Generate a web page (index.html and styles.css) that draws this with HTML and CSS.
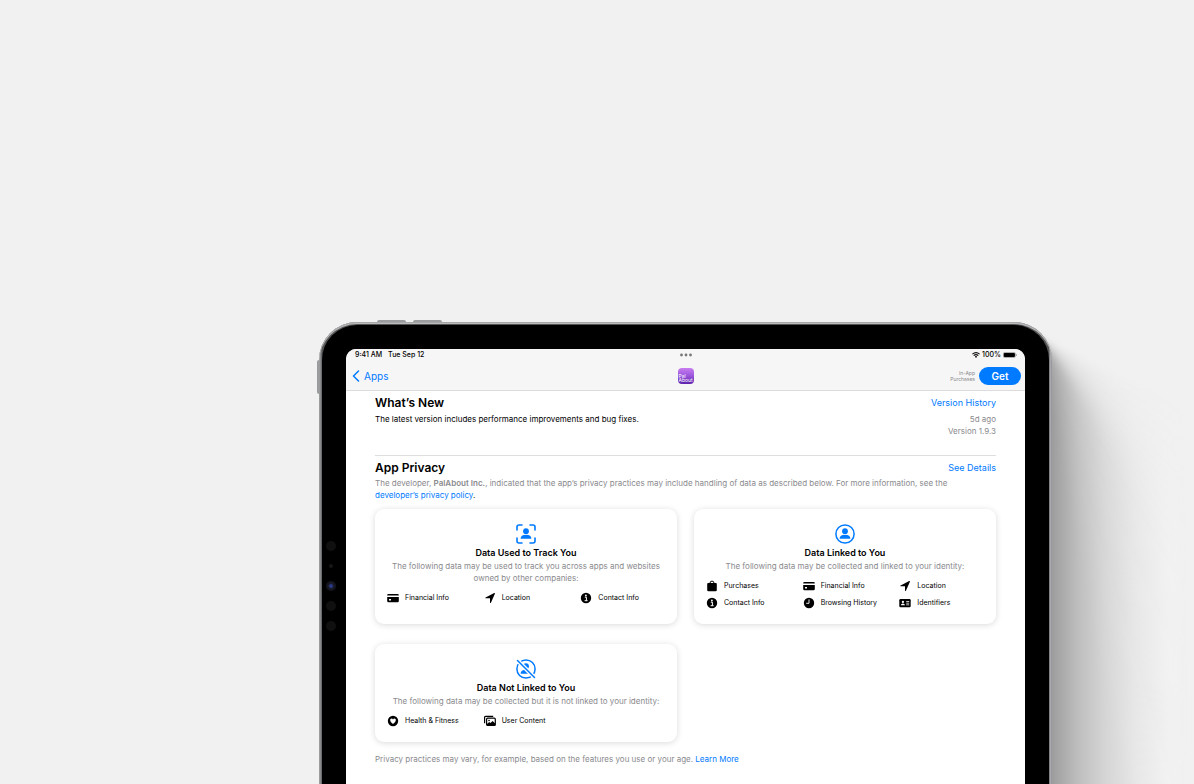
FILE: index.html
```html
<!DOCTYPE html>
<html lang="en">
<head>
<meta charset="utf-8">
<meta name="viewport" content="width=device-width, initial-scale=1">
<title>App Privacy</title>
<link rel="stylesheet" href="styles.css">
</head>
<body>
<svg class="sprite" aria-hidden="true">
  <symbol id="card" viewBox="0 0 12 12"><path d="M1.400 1.900h9.200Q11.800 1.900 11.800 3.100v.5H.2v-.5Q.2 1.900 1.400 1.900z"/><path fill-rule="evenodd" d="M.2 4.900h11.600v4.200q0 1.200-1.200 1.200H1.400Q.2 10.300.2 9.100zM2 6.900v1.500h2V6.900z"/></symbol>
  <symbol id="location" viewBox="0 0 12 12"><path d="M10.900 1.700 6.900 10.700Q6.300 11.500 6 10.500V6.300L1.600 6.200Q.7 5.900 1.600 5.400L10.200 1.100Q11.200.800 10.900 1.700z"/></symbol>
  <symbol id="info" viewBox="0 0 12 12"><circle cx="6" cy="6" r="5.200"/><circle cx="5.900" cy="3.500" r=".9" fill="#fff"/><path d="M4.800 5.200h1.600v3.400M4.600 8.700h3" fill="none" stroke="#fff" stroke-width="1"/></symbol>
  <symbol id="bag" viewBox="0 0 12 12"><path d="M2.200 3h7.600q1 0 1 1v6q0 1.300-1.300 1.300h-7Q1.200 11.300 1.200 10V4q0-1 1-1z"/><path d="M3.900 3.500Q3.900 1.100 6 1.100T8.100 3.500" fill="none" stroke="currentColor" stroke-width="1"/></symbol>
  <symbol id="clock" viewBox="0 0 12 12"><circle cx="6" cy="6" r="5.200"/><path d="M6 2.800v3.500H3.600" fill="none" stroke="#fff" stroke-width=".9" stroke-linecap="round"/></symbol>
  <symbol id="idcard" viewBox="0 0 12 12"><rect x=".3" y="2" width="11.400" height="8.300" rx="1.200"/><g fill="#fff"><circle cx="3.900" cy="4.900" r="1.100"/><path d="M1.900 8.300q0-1.700 2-1.700t2 1.700z"/><path d="M7.200 4h3v.8h-3zM7.200 5.700h3v.8h-3zM7.200 7.400h3v.8h-3z"/></g></symbol>
  <symbol id="heart" viewBox="0 0 12 12"><circle cx="6" cy="6" r="5.200"/><path fill="#fff" d="M6 9.100Q3.100 7.200 3.100 5.100 3.100 3.600 4.500 3.500 5.500 3.500 6 4.400 6.500 3.500 7.500 3.500 8.900 3.600 8.900 5.100 8.900 7.200 6 9.100z"/></symbol>
  <symbol id="photos" viewBox="0 0 12 12"><path d="M.6 8.300V2.300Q.6 1.300 1.600 1.300h7.600" fill="none" stroke="currentColor" stroke-width="1.200"/><rect x="2.600" y="3.200" width="8.700" height="7.200" rx="1" fill="none" stroke="currentColor" stroke-width="1.200"/><circle cx="5" cy="5.500" r=".8"/><path d="M2.700 9.200 5.300 7l1.200 1L8.600 5.900l2.600 2.500v2H2.700z"/></symbol>
  <symbol id="person" viewBox="0 0 20 20"><circle cx="10" cy="7.200" r="2.900"/><path d="M4.600 14.800q0-4 5.400-4t5.400 4z"/></symbol>
</svg>

<div class="scene">
  <div class="device">
    <div class="shadow"><div class="shadow-shape"></div></div>
    <div class="key key-up"></div>
    <div class="key key-down"></div>
    <div class="key key-power"></div>
    <div class="bezel">
      <div class="sensors"><i class="lens"></i><i class="dot"></i><i class="lens camera"></i><i class="lens"></i><i class="lens"></i></div>
      <div class="screen">
        <header class="topbar">
          <div class="status">
            <div class="status-left"><span>9:41 AM</span><span>Tue Sep 12</span></div>
            <svg class="dots" viewBox="0 0 12 4" fill="#777"><circle cx="1.500" cy="2" r="1.400"/><circle cx="6" cy="2" r="1.400"/><circle cx="10.500" cy="2" r="1.400"/></svg>
            <div class="status-right">
              <svg class="wifi" viewBox="0 0 8 6"><g fill="none" stroke="#111" stroke-width="1.100"><path d="M.4 2.200Q4-.9 7.600 2.200M1.700 3.600Q4 1.600 6.300 3.600"/></g><path d="M2.800 4.600Q4 3.600 5.200 4.600L4 5.900z"/></svg>
              <span>100%</span>
              <svg class="battery" viewBox="0 0 15 6"><rect x=".3" y=".3" width="13" height="5.400" rx="1.500" fill="none" stroke="#777" stroke-width=".6"/><rect x=".8" y=".8" width="12" height="4.400" rx="1"/><path d="M14 2v2q.9-.4.900-1t-.9-1z" fill="#777"/></svg>
            </div>
          </div>
          <nav class="nav">
            <a class="back" href="#"><svg viewBox="0 0 8 12"><path d="M6.500 1 1.500 6l5 5" fill="none" stroke="currentColor" stroke-width="1.500" stroke-linecap="round" stroke-linejoin="round"/></svg>Apps</a>
            <div class="app-icon">Pal<br>About</div>
            <div class="purchase"><span class="iap">In-App<br>Purchases</span><button class="get" type="button">Get</button></div>
          </nav>
        </header>
        <main class="content">
          <section class="news">
            <div class="section-head"><h2>What’s New</h2><a href="#">Version History</a></div>
            <div class="release"><p>The latest version includes performance improvements and bug fixes.</p><p class="meta">5d ago<br>Version 1.9.3</p></div>
          </section>
          <section class="privacy">
            <div class="section-head"><h2>App Privacy</h2><a href="#">See Details</a></div>
            <p class="intro">The developer, <b>PalAbout Inc.</b>, indicated that the app’s privacy practices may include handling of data as described below. For more information, see the <a href="#">developer’s privacy policy</a><span class="stop">.</span></p>
            <div class="cards">
              <article class="card">
                <svg class="hero" viewBox="0 0 20 20"><path d="M1 6V3q0-2 2-2h3M14 1h3q2 0 2 2v3M19 14v3q0 2-2 2h-3M6 19H3q-2 0-2-2v-3" fill="none" stroke="currentColor" stroke-width="1.600" stroke-linecap="round"/><use href="#person"/></svg>
                <h3>Data Used to Track You</h3>
                <p>The following data may be used to track you across apps and websites owned by other companies:</p>
                <ul>
                  <li><svg><use href="#card"/></svg>Financial Info</li>
                  <li><svg><use href="#location"/></svg>Location</li>
                  <li><svg><use href="#info"/></svg>Contact Info</li>
                </ul>
              </article>
              <article class="card">
                <svg class="hero" viewBox="0 0 20 20"><circle cx="10" cy="10" r="9.100" fill="none" stroke="currentColor" stroke-width="1.500"/><use href="#person"/></svg>
                <h3>Data Linked to You</h3>
                <p>The following data may be collected and linked to your identity:</p>
                <ul>
                  <li><svg><use href="#bag"/></svg>Purchases</li>
                  <li><svg><use href="#card"/></svg>Financial Info</li>
                  <li><svg><use href="#location"/></svg>Location</li>
                  <li><svg><use href="#info"/></svg>Contact Info</li>
                  <li><svg><use href="#clock"/></svg>Browsing History</li>
                  <li><svg><use href="#idcard"/></svg>Identifiers</li>
                </ul>
              </article>
              <article class="card">
                <svg class="hero" viewBox="0 0 20 20"><circle cx="10" cy="10" r="9.100" fill="none" stroke="currentColor" stroke-width="1.500"/><use href="#person"/><path d="M1.500 1.500l17 17" stroke="#fff" stroke-width="4"/><path d="M1.500 1.500l17 17" stroke="currentColor" stroke-width="1.500" stroke-linecap="round"/></svg>
                <h3>Data Not Linked to You</h3>
                <p>The following data may be collected but it is not linked to your identity:</p>
                <ul>
                  <li><svg><use href="#heart"/></svg>Health &amp; Fitness</li>
                  <li><svg><use href="#photos"/></svg>User Content</li>
                </ul>
              </article>
            </div>
            <p class="note">Privacy practices may vary, for example, based on the features you use or your age. <a href="#">Learn More</a></p>
          </section>
        </main>
      </div>
    </div>
  </div>
</div>
</body>
</html>
```
FILE: styles.css
```css
* { box-sizing: border-box; }
body { margin: 0; background: #f1f1f1; color: #000; font-family: Inter, "Liberation Sans", sans-serif; font-size: 8px; line-height: 12px; }
h2, h3, p, ul { margin: 0; padding: 0; }
a { color: #007aff; text-decoration: none; }
.sprite { display: none; }

.scene { display: flex; min-height: 100vh; padding: 322px 142px 0 319px; overflow: hidden; }
.device { position: relative; flex: 1; display: flex; min-width: 0; padding: 3px 3px 0; border-radius: 38px 38px 0 0; background: linear-gradient(to right, #a2a4a5, #808284 2px, #555 3px, #555 calc(100% - 3px), #b0b1b4 calc(100% - 2px), #909194); box-shadow: inset 0 1px 0 #a5a6a8, inset 0 2px 0 #b9babc; }
.shadow { position: absolute; z-index: -1; left: calc(100% - 12px); top: 16px; bottom: -40px; width: 140px; filter: blur(3px); }
.shadow-shape { height: 100%; background: linear-gradient(to right, #969696 8px, #a5a5a5 18px, #bebebe 38px, #d5d5d5 65px, #e6e6e6 95px, #f1f1f1 128px); mask-image: conic-gradient(from 0deg at 0 0, transparent 114deg, #0005 135deg, #000c 150deg, #000 170deg); }
.key { position: absolute; background: #9b9c9e; }
.key-up, .key-down { top: -2px; width: 29px; height: 2px; border-radius: 2px 2px 0 0; }
.key-up { left: 58px; }
.key-down { left: 94px; }
.key-power { left: -2px; top: 38px; width: 2px; height: 34px; border-radius: 2px 0 0 2px; }
.bezel { position: relative; flex: 1; display: flex; min-width: 0; padding: 24px 24px 0; border-radius: 35px 35px 0 0; background: #000; }
.sensors { position: absolute; left: 4px; top: 216px; display: flex; flex-direction: column; align-items: center; gap: 10px; }
.lens { width: 10px; height: 10px; border-radius: 50%; background: #101010; }
.dot { width: 4px; height: 4px; margin: 3px 0; border-radius: 50%; background: #171717; }
.camera { background: radial-gradient(circle, #2c3c8c 1px, #15161d 3px); }
.screen { flex: 1; min-width: 0; border-radius: 10px 10px 0 0; background: #fff; overflow: hidden; }

.topbar { background: #f6f6f6; border-bottom: 1px solid #dcdcdc; padding: 0 4px; }
.status { display: grid; grid-template-columns: 1fr auto 1fr; align-items: center; height: 12px; font-size: 7px; font-weight: 500; }
.status-left { display: flex; gap: 6px; padding-left: 5px; }
.dots { width: 12px; height: 4px; }
.status-right { display: flex; align-items: center; justify-content: flex-end; gap: 2px; padding-right: 4px; }
.wifi { width: 8px; height: 6px; }
.battery { width: 14px; height: 6px; }
.nav { display: grid; grid-template-columns: 1fr auto 1fr; align-items: center; height: 29px; }
.back { display: flex; align-items: center; gap: 4px; padding-left: 2px; font-size: 10px; }
.back svg { width: 8px; height: 12px; }
.app-icon { width: 16px; height: 16px; padding: 6px 0 0 1px; border-radius: 4px; background: linear-gradient(#c77df0, #9a55dc 50%, #5b22aa); color: #fff; font-size: 5px; line-height: 4px; overflow: hidden; }
.purchase { display: flex; align-items: center; justify-content: flex-end; gap: 4px; }
.iap { color: #8a8a8e; font-size: 5px; line-height: 6px; text-align: right; }
.get { width: 42px; height: 18px; padding: 0; border: 0; border-radius: 9px; background: #007aff; color: #fff; font: 600 10px/18px Inter, sans-serif; }

.content { padding: 4px 29px 16px; }
.section-head { display: flex; align-items: center; justify-content: space-between; height: 16px; }
.section-head h2 { font-size: 12px; font-weight: 600; line-height: 16px; }
.section-head a { font-size: 9px; }
.news { height: 61px; border-bottom: 1px solid #dedee0; }
.release { display: flex; justify-content: space-between; padding-top: 2px; }
.meta { color: #8a8a8e; text-align: right; }
.privacy { padding-top: 4px; }
.intro { padding: 1px 24px 0 0; color: #8a8a8e; }
.stop { color: #000; }
.intro b { font-weight: 600; }
.cards { display: grid; grid-template-columns: repeat(2, minmax(0, 1fr)); gap: 20px 17px; margin-top: 8px; }
.card { padding: 15px 12px; border-radius: 9px; background: #fff; box-shadow: 0 1px 6px #00000026; text-align: center; }
.hero { display: block; width: 20px; height: 20px; margin: 0 auto 2px; color: #007aff; fill: currentColor; }
.card h3 { font-size: 9px; font-weight: 600; line-height: 14px; }
.card p { color: #8a8a8e; }
.card ul { display: grid; grid-template-columns: repeat(3, 1fr); gap: 5px 0; margin: 8px -12px 0 0; list-style: none; text-align: left; font-size: 7px; }
.card li { display: flex; align-items: center; gap: 6px; height: 12px; }
.card li svg { width: 12px; height: 12px; }
.note { margin-top: 11px; color: #8a8a8e; }
```
